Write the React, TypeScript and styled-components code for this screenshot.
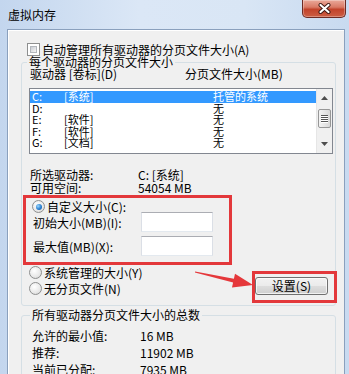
import styled, { createGlobalStyle } from 'styled-components'

const FONT = `"Noto Sans CJK SC", "Microsoft YaHei", sans-serif`

const GlobalStyle = createGlobalStyle`
  html, body { margin: 0; padding: 0; }
  body { background: #cfdff2; }
`

const drives = [
    { letter: 'C:', label: '[系统]', size: '托管的系统', selected: true },
    { letter: 'D:', label: '', size: '无' },
    { letter: 'E:', label: '[软件]', size: '无' },
    { letter: 'F:', label: '[软件]', size: '无' },
    { letter: 'G:', label: '[文档]', size: '无' },
]

const totals = [
    ['允许的最小值:', '16 MB'],
    ['推荐:', '11902 MB'],
    ['当前已分配:', '7935 MB'],
]

export default function App() {
    return (
        <Window>
            <GlobalStyle />
            <TitleBar>
                <Title>虚拟内存</Title>
                <CloseButton>
                    <svg width="13" height="11" viewBox="0 0 13 11">
                        <path d="M2.5 2 L10.5 9 M10.5 2 L2.5 9" stroke="#3a1712" strokeWidth="4" strokeLinecap="round" />
                        <path d="M2.5 2 L10.5 9 M10.5 2 L2.5 9" stroke="#ffffff" strokeWidth="2.2" strokeLinecap="round" />
                    </svg>
                </CloseButton>
            </TitleBar>
            <Frame>
                <Client>
                    <CheckRow>
                        <CheckBox />
                        <span>自动管理所有驱动器的分页文件大小(A)</span>
                    </CheckRow>

                    <Group>
                        <Legend>每个驱动器的分页文件大小</Legend>
                        <HeaderRow>
                            <HeaderCol>驱动器 [卷标](D)</HeaderCol>
                            <span>分页文件大小(MB)</span>
                        </HeaderRow>
                        <ListBox>
                            <Rows>
                                {drives.map(d => (
                                    <DriveRow key={d.letter} $selected={d.selected}>
                                        <LetterCol>{d.letter}</LetterCol>
                                        <LabelCol>{d.label}</LabelCol>
                                        <span>{d.size}</span>
                                    </DriveRow>
                                ))}
                            </Rows>
                            <ScrollBar>
                                <ScrollButton>
                                    <svg width="7" height="4" viewBox="0 0 7 4"><polygon points="0,4 7,4 3.5,0" fill="#4d4d4d" /></svg>
                                </ScrollButton>
                                <Thumb>
                                    <Grip /><Grip /><Grip /><Grip />
                                </Thumb>
                                <ScrollSpace />
                                <ScrollButton>
                                    <svg width="7" height="4" viewBox="0 0 7 4"><polygon points="0,0 7,0 3.5,4" fill="#4d4d4d" /></svg>
                                </ScrollButton>
                            </ScrollBar>
                        </ListBox>

                        <InfoBlock>
                            <InfoRow><InfoLabel>所选驱动器:</InfoLabel><span>C: [系统]</span></InfoRow>
                            <InfoRow><InfoLabel>可用空间:</InfoLabel><span>54054 MB</span></InfoRow>
                        </InfoBlock>

                        <Highlight>
                            <RadioRow>
                                <Radio $checked />
                                <span>自定义大小(C):</span>
                            </RadioRow>
                            <InputRow>
                                <InfoLabel>初始大小(MB)(I):</InfoLabel>
                                <TextBox />
                            </InputRow>
                            <InputRow $gap={4}>
                                <InfoLabel>最大值(MB)(X):</InfoLabel>
                                <TextBox />
                            </InputRow>
                        </Highlight>

                        <BottomRow>
                            <RadioColumn>
                                <RadioRow $height={14}>
                                    <Radio />
                                    <span>系统管理的大小(Y)</span>
                                </RadioRow>
                                <RadioRow $height={14}>
                                    <Radio />
                                    <span>无分页文件(N)</span>
                                </RadioRow>
                            </RadioColumn>
                            <ButtonFrame>
                                <Button>设置(S)</Button>
                            </ButtonFrame>
                        </BottomRow>
                    </Group>

                    <Group $second>
                        <Legend>所有驱动器分页文件大小的总数</Legend>
                        <TotalsBlock>
                            {totals.map(([label, value]) => (
                                <TotalRow key={label}>
                                    <InfoLabel>{label}</InfoLabel>
                                    <span>{value}</span>
                                </TotalRow>
                            ))}
                        </TotalsBlock>
                    </Group>
                </Client>
            </Frame>
            <Arrow width="64" height="32" viewBox="0 0 64 32">
                <polygon points="2.1,9.4 40.9,16.7 42,11.8 60,23 39,25.4 40.1,20.6 1.9,10.6" fill="#e5383b" />
            </Arrow>
        </Window>
    )
}

const Window = styled.div`
    position: relative;
    width: 349px;
    height: 374px;
    overflow: hidden;
    display: flex;
    flex-direction: column;
    background: linear-gradient(90deg, #c3d6ee 0%, #dbe7f6 40%, #d9e6f5 70%, #c8daf0 100%);
    font-family: ${FONT};
    font-size: 12px;
    color: #000;
`

const TitleBar = styled.div`
    flex: none;
    height: 29px;
    display: flex;
    justify-content: space-between;
    align-items: flex-start;
    padding: 0 3px 0 8px;
`

const Title = styled.div`
    line-height: 30px;
    font-size: 12px;
`

const CloseButton = styled.div`
    width: 44px;
    height: 18px;
    box-sizing: border-box;
    border: 1px solid #6d2b24;
    border-top: none;
    border-radius: 0 0 5px 5px;
    background: linear-gradient(180deg, #eaa99a 0%, #d97a66 42%, #c2432b 55%, #cc5e44 100%);
    box-shadow: inset 0 0 0 1px rgba(255, 255, 255, 0.3);
    display: flex;
    align-items: center;
    justify-content: center;
`

const Frame = styled.div`
    flex: 1;
    min-height: 0;
    display: flex;
    padding: 0 4px 0 7px;
`

const Client = styled.div`
    flex: 1;
    background: #f0f0f0;
    border: 1px solid #8aa0bd;
    border-bottom: none;
    box-shadow: inset 1px 1px 0 #ffffff;
    padding: 12px 8px 0 13px;
    display: flex;
    flex-direction: column;
`

const CheckRow = styled.div`
    height: 14px;
    display: flex;
    align-items: center;
    gap: 2px;
    margin-left: 6px;
`

const CheckBox = styled.span`
    width: 13px;
    height: 13px;
    box-sizing: border-box;
    border: 1px solid #8e8f8f;
    background: #fff;
    padding: 2px;
    display: flex;

    &::after {
        content: '';
        flex: 1;
        border: 1px solid #b3b7bd;
        background: linear-gradient(135deg, #c9cdd3 0%, #e9eaec 70%, #f6f6f6 100%);
    }
`

const Group = styled.fieldset<{ $second?: boolean }>`
    margin: ${p => (p.$second ? '3px 0 0' : '0')};
    padding: ${p => (p.$second ? '6px 2px 0 10px' : '0 2px 2px 7px')};
    min-width: 0;
    border: 1px solid #d5dfe5;
    border-radius: 3px;
`

const Legend = styled.legend`
    padding: 0 2px;
    margin-left: -2px;
    line-height: 12px;
`

const HeaderRow = styled.div`
    display: flex;
    line-height: 12px;
    padding-left: 1px;
`

const HeaderCol = styled.span`
    width: 155px;
`

const ListBox = styled.div`
    margin-top: 8px;
    height: 66px;
    box-sizing: border-box;
    border: 1px solid #828790;
    background: #fff;
    display: flex;
`

const Rows = styled.div`
    flex: 1;
    padding-top: 2px;
    display: flex;
    flex-direction: column;
    font-size: 11px;
`

const DriveRow = styled.div<{ $selected?: boolean }>`
    height: 11.5px;
    line-height: 11.5px;
    display: flex;
    padding-left: 2px;
    background: ${p => (p.$selected ? '#3399ff' : 'transparent')};
    color: ${p => (p.$selected ? '#fff' : '#000')};
    white-space: nowrap;
`

const LetterCol = styled.span`
    width: 32px;
`

const LabelCol = styled.span`
    width: 149px;
`

const ScrollBar = styled.div`
    width: 15px;
    background: #f0f0f0;
    border-left: 1px solid #e6e6e6;
    display: flex;
    flex-direction: column;
    align-items: center;
`

const ScrollButton = styled.div`
    height: 18px;
    width: 100%;
    display: flex;
    align-items: center;
    justify-content: center;
`

const Thumb = styled.div`
    margin-top: 2px;
    width: 13px;
    height: 19px;
    box-sizing: border-box;
    border: 1px solid #979797;
    border-radius: 2px;
    background: linear-gradient(90deg, #f3f3f3 0%, #e6e6e6 50%, #d8d8d8 100%);
    display: flex;
    flex-direction: column;
    align-items: center;
    justify-content: center;
    gap: 1px;
`

const Grip = styled.span`
    width: 7px;
    height: 1px;
    background: #555;
    box-shadow: 0 1px 0 #fff;
`

const ScrollSpace = styled.div`
    flex: 1;
`

const InfoBlock = styled.div`
    margin-top: 14px;
    padding-left: 1px;
`

const InfoRow = styled.div`
    display: flex;
    line-height: 13px;
    white-space: nowrap;
`

const InfoLabel = styled.span`
    width: 108px;
    flex: none;
`

const Highlight = styled.div`
    margin: 1px 0 0 -6px;
    width: 209px;
    box-sizing: border-box;
    border: 3px solid #e3383b;
    padding: 3px 0 6px 6px;
`

const RadioRow = styled.div<{ $height?: number }>`
    height: ${p => p.$height ?? 11}px;
    display: flex;
    align-items: center;
    gap: 2px;
    white-space: nowrap;
`

const Radio = styled.span<{ $checked?: boolean }>`
    width: 13px;
    height: 13px;
    box-sizing: border-box;
    border-radius: 50%;
    border: 1px solid #8e8f8f;
    background: radial-gradient(circle at 40% 35%, #ffffff 0%, #e8e8e8 60%, #cfcfcf 100%);
    display: flex;
    align-items: center;
    justify-content: center;

    &::after {
        content: '';
        width: 6px;
        height: 6px;
        border-radius: 50%;
        background: ${p => (p.$checked ? 'radial-gradient(circle at 35% 35%, #9ad8ff 0%, #2a7fd0 55%, #17509a 100%)' : 'transparent')};
    }
`

const InputRow = styled.div<{ $gap?: number }>`
    height: 20px;
    margin-top: ${p => p.$gap ?? 0}px;
    padding-left: 1px;
    display: flex;
    align-items: center;
    white-space: nowrap;
`

const TextBox = styled.div`
    width: 72px;
    height: 20px;
    box-sizing: border-box;
    background: #fff;
    border: 1px solid #dbdfe6;
    border-top-color: #abadb3;
    border-bottom-color: #e3e9ef;
`

const BottomRow = styled.div`
    display: flex;
    align-items: flex-start;
`

const RadioColumn = styled.div`
    display: flex;
    flex-direction: column;
    gap: 2px;
`

const ButtonFrame = styled.div`
    margin: 6px -4px 0 auto;
    border: 3px solid #e3383b;
    padding: 3px 6px 5px 0;
`

const Button = styled.div`
    width: 73px;
    height: 18px;
    box-sizing: border-box;
    border: 1px solid #707070;
    border-radius: 3px;
    background: linear-gradient(180deg, #f2f2f2 0%, #ebebeb 48%, #dddddd 52%, #cfcfcf 100%);
    box-shadow: inset 0 0 0 1px rgba(255, 255, 255, 0.7);
    display: flex;
    align-items: center;
    justify-content: center;
    line-height: 16px;
`

const TotalsBlock = styled.div`
    display: flex;
    flex-direction: column;
`

const TotalRow = styled.div`
    display: flex;
    line-height: 17px;
    white-space: nowrap;
`

const Arrow = styled.svg`
    position: absolute;
    left: 193px;
    top: 262px;
`
